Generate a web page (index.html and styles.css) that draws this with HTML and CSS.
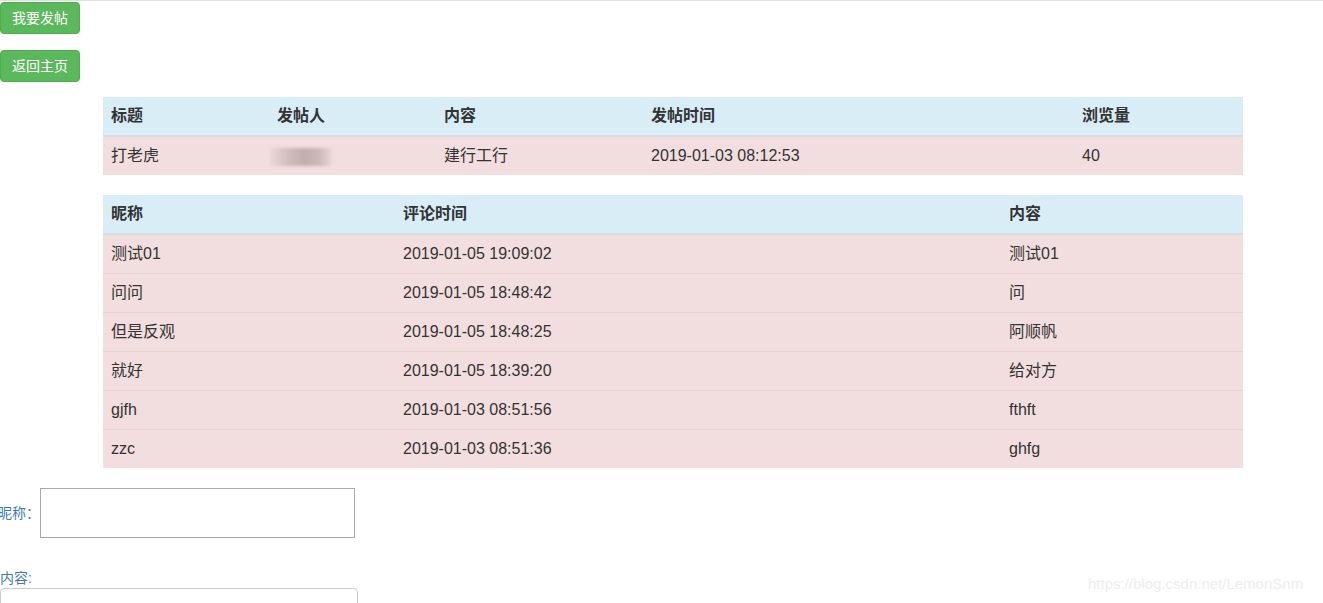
FILE: index.html
```html
<!DOCTYPE html>
<html lang="zh-CN">
<head>
<meta charset="utf-8">
<title>帖子详情</title>
<link rel="stylesheet" href="styles.css">
</head>
<body>
<div class="topline"></div>
<div class="actions">
  <button class="btn">我要发帖</button>
  <button class="btn">返回主页</button>
</div>
<table class="tbl t1">
  <colgroup><col style="width:166px"><col style="width:167px"><col style="width:207px"><col style="width:431px"><col style="width:169px"></colgroup>
  <thead><tr><th>标题</th><th>发帖人</th><th>内容</th><th>发帖时间</th><th>浏览量</th></tr></thead>
  <tbody><tr><td>打老虎</td><td><span class="blur"></span></td><td>建行工行</td><td>2019-01-03 08:12:53</td><td>40</td></tr></tbody>
</table>
<table class="tbl t2">
  <colgroup><col style="width:292px"><col style="width:606px"><col style="width:242px"></colgroup>
  <thead><tr><th>昵称</th><th>评论时间</th><th>内容</th></tr></thead>
  <tbody>
    <tr><td>测试01</td><td>2019-01-05 19:09:02</td><td>测试01</td></tr>
    <tr><td>问问</td><td>2019-01-05 18:48:42</td><td>问</td></tr>
    <tr><td>但是反观</td><td>2019-01-05 18:48:25</td><td>阿顺帆</td></tr>
    <tr><td>就好</td><td>2019-01-05 18:39:20</td><td>给对方</td></tr>
    <tr><td>gjfh</td><td>2019-01-03 08:51:56</td><td>fthft</td></tr>
    <tr><td>zzc</td><td>2019-01-03 08:51:36</td><td>ghfg</td></tr>
  </tbody>
</table>
<div class="form-row">
  <label class="lbl">昵称：</label>
  <input class="nick" type="text">
</div>
<div class="content-lbl">内容:</div>
<textarea class="content"></textarea>
<div class="watermark">https://blog.csdn.net/LemonSnm</div>
</body>
</html>
```
FILE: styles.css
```css
html, body { margin: 0; padding: 0; background: #fff; }
body {
  font-family: "Liberation Sans", "Noto Sans CJK SC", sans-serif;
  font-size: 14px;
  line-height: 20px;
  color: #333;
  overflow: hidden;
  height: 603px;
  position: relative;
}
.topline { height: 1px; background: #e0e0e0; }
.actions { display: flex; flex-direction: column; align-items: flex-start; gap: 16px; padding-top: 1px; }
.btn {
  width: 80px; height: 32px;
  background: #5cb85c; border: 1px solid #4cae4c; border-radius: 4px;
  color: #fff; font-family: inherit; font-size: 14px; line-height: 20px;
  padding: 0; cursor: pointer;
}
.tbl {
  border-collapse: collapse; border-spacing: 0; table-layout: fixed;
  width: 1140px; margin-left: 103px; margin-bottom: 20px;
  font-size: 16px;
}
.t1 { margin-top: 15px; }
.tbl th, .tbl td { text-align: left; padding: 8px; line-height: 22px; vertical-align: top; }
.tbl th { background: #d9edf7; font-weight: bold; border-bottom: 2px solid #d4dde2; height: 22px; }
.tbl td { background: #f2dede; border-top: 1px solid #e8d2d2; height: 22px; }
.tbl tbody tr:first-child td { border-top: none; }
.blur {
  display: inline-block; width: 62px; height: 18px; margin-left: -7px; margin-top: 3px; vertical-align: top;
  background: linear-gradient(90deg, rgba(225,205,205,0.4), #d5c0c0 25%, #c2aeae 55%, #ceb9b9 80%, rgba(225,205,205,0.4));
  filter: blur(1.5px);
}
.form-row { display: flex; align-items: center; margin-left: -2px; }
.lbl { color: #3f7ab5; font-size: 14px; }
.nick { width: 315px; height: 50px; box-sizing: border-box; border: 1px solid #a9a9a9; margin: 0; padding: 0; }
.content-lbl { color: #3f7ab5; margin-top: 30px; line-height: 20px; }
.content {
  display: block; width: 358px; height: 60px; box-sizing: border-box;
  border: 1px solid #ccc; border-radius: 4px; margin: 0; padding: 0; resize: none;
}
.watermark {
  position: absolute; left: 1088px; top: 574px;
  color: #ededed; font-size: 15px; font-family: "Liberation Sans", sans-serif;
}
```
